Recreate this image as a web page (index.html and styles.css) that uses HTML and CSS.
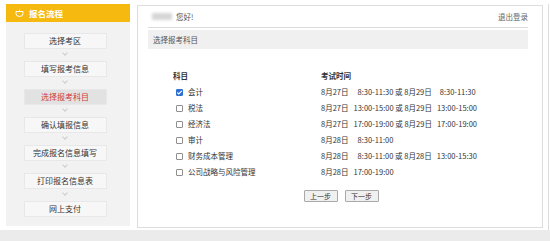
FILE: index.html
```html
<!DOCTYPE html>
<html lang="zh-CN">
<head>
<meta charset="UTF-8">
<meta name="viewport" content="width=device-width, initial-scale=1.0">
<title>选择报考科目</title>
<link rel="stylesheet" href="styles.css">
</head>
<body>
  <div class="page">
    <div class="sidebar">
      <div class="side-head">
        <svg class="side-icon" width="9" height="8" viewBox="0 0 9 8">
          <path d="M1 2.5h7v2a3.5 3 0 0 1-7 0z" fill="none" stroke="#fff" stroke-width="1"/>
          <path d="M4.5 0.5v2" stroke="#fff" stroke-width="1"/>
        </svg>
        <span>报名流程</span>
      </div>
      <div class="steps">
        <div class="step">选择考区</div>
        <div class="arrow"></div>
        <div class="step">填写报考信息</div>
        <div class="arrow"></div>
        <div class="step active">选择报考科目</div>
        <div class="arrow"></div>
        <div class="step">确认填报信息</div>
        <div class="arrow"></div>
        <div class="step">完成报名信息填写</div>
        <div class="arrow"></div>
        <div class="step">打印报名信息表</div>
        <div class="arrow"></div>
        <div class="step">网上支付</div>
      </div>
    </div>

    <div class="main">
      <div class="top-row">
        <div class="greet"><span class="blur"></span>您好!</div>
        <div class="logout">退出登录</div>
      </div>
      <div class="title-bar">选择报考科目</div>

      <table class="subjects">
        <tr class="head">
          <td class="c1">科目</td>
          <td>考试时间</td>
        </tr>
        <tr>
          <td class="c1"><span class="cb on"><svg width="7" height="7" viewBox="0 0 7 7"><path d="M1.3 3.5l1.5 1.5L5.8 1.9" fill="none" stroke="#fff" stroke-width="1.1"/></svg></span>会计</td>
          <td>8月27日<span class="t sp">8:30-11:30</span> 或 8月29日<span class="t sp2">8:30-11:30</span></td>
        </tr>
        <tr>
          <td class="c1"><span class="cb"></span>税法</td>
          <td>8月27日<span class="t">13:00-15:00</span> 或 8月29日<span class="t">13:00-15:00</span></td>
        </tr>
        <tr>
          <td class="c1"><span class="cb"></span>经济法</td>
          <td>8月27日<span class="t">17:00-19:00</span> 或 8月29日<span class="t">17:00-19:00</span></td>
        </tr>
        <tr>
          <td class="c1"><span class="cb"></span>审计</td>
          <td>8月28日<span class="t sp">8:30-11:00</span></td>
        </tr>
        <tr>
          <td class="c1"><span class="cb"></span>财务成本管理</td>
          <td>8月28日<span class="t sp">8:30-11:00</span> 或 8月28日<span class="t">13:00-15:30</span></td>
        </tr>
        <tr>
          <td class="c1"><span class="cb"></span>公司战略与风险管理</td>
          <td>8月28日<span class="t">17:00-19:00</span></td>
        </tr>
      </table>

      <div class="buttons">
        <button class="btn">上一步</button>
        <button class="btn">下一步</button>
      </div>
    </div>
    <div class="edge"></div>
  </div>
  <div class="footer"></div>
</body>
</html>
```

FILE: styles.css
```css
body {
  margin: 0;
  padding: 0;
  background-color: #ffffff;
  color: #333333;
  font-family: "Noto Sans CJK SC", "Liberation Sans", sans-serif;
}

.page {
  display: flex;
  align-items: flex-start;
  height: 230px;
  padding: 4px 0 0 6px;
  box-sizing: border-box;
}

/* left process column */
.sidebar {
  width: 124px;
  height: 222px;
  display: flex;
  flex-direction: column;
}

.side-head {
  height: 18px;
  background-color: #f6b910;
  display: flex;
  align-items: center;
  padding-left: 9px;
  gap: 5px;
  color: #ffffff;
  font-size: 8.5px;
  font-weight: bold;
}

.side-icon {
  display: block;
}

.steps {
  flex: 1;
  background-color: #f2f2f2;
  display: flex;
  flex-direction: column;
  align-items: center;
  padding-top: 11px;
  padding-right: 6px;
}

.step {
  width: 83px;
  height: 16px;
  box-sizing: border-box;
  border: 1px solid #e8e8e8;
  background-color: #f7f7f7;
  font-size: 8px;
  line-height: 14px;
  text-align: center;
  color: #333333;
}

.step.active {
  background-color: #e2e2e2;
  color: #d23a3a;
}

.arrow {
  height: 12px;
  width: 12px;
  position: relative;
}

.arrow::after {
  content: "";
  position: absolute;
  left: 4px;
  top: 2px;
  width: 3px;
  height: 3px;
  border-right: 1px solid #cccccc;
  border-bottom: 1px solid #cccccc;
  transform: rotate(45deg);
}

/* main panel */
.main {
  width: 406px;
  height: 223px;
  margin-left: 7px;
  margin-top: 1px;
  box-sizing: border-box;
  border: 1px solid #dddddd;
  padding: 0 14px 0 10px;
  font-size: 7.5px;
}

.top-row {
  display: flex;
  justify-content: space-between;
  align-items: center;
  height: 21px;
  border-bottom: 1px solid #dcdcdc;
}

.greet {
  display: flex;
  align-items: center;
  padding-left: 4px;
  color: #555555;
}

.blur {
  display: inline-block;
  width: 20px;
  height: 7px;
  margin-right: 4px;
  background-color: #d6d6d6;
  filter: blur(1.5px);
}

.logout {
  color: #666666;
}

.title-bar {
  margin-top: 2px;
  height: 19px;
  line-height: 19px;
  background-color: #f0f0f0;
  padding-left: 5px;
  color: #555555;
}

.subjects {
  margin: 19px 0 0 25px;
  border-collapse: collapse;
  color: #333333;
}

.subjects td {
  height: 16px;
  padding: 0;
  white-space: nowrap;
}

.subjects .c1 {
  width: 148px;
}

.subjects .head td {
  font-weight: bold;
  height: 15px;
}

.cb {
  display: inline-block;
  width: 7px;
  height: 7px;
  box-sizing: border-box;
  border: 1px solid #8f8f8f;
  border-radius: 1px;
  margin: 0 5px 0 3px;
  vertical-align: -1px;
  background-color: #ffffff;
}

.cb.on {
  background-color: #2d6fd2;
  border-color: #2d6fd2;
  position: relative;
}

.cb.on svg {
  position: absolute;
  left: -1px;
  top: -1px;
}

.t {
  margin-left: 5px;
}

.t.sp {
  margin-left: 9px;
}

.t.sp2 {
  margin-left: 8px;
}

.buttons {
  display: flex;
  justify-content: center;
  gap: 7px;
  margin-top: 11px;
  padding-left: 6px;
}

.btn {
  width: 34px;
  height: 12px;
  padding: 0;
  font-family: "Noto Sans CJK SC", sans-serif;
  font-size: 7px;
  line-height: 10px;
  color: #333333;
  background-color: #f0f0f0;
  border: 1px solid #a9a9a9;
  border-radius: 1px;
}

.edge {
  width: 1px;
  height: 226px;
  margin-left: 5px;
  background-color: #dddddd;
}

.footer {
  height: 11px;
  background-color: #ebebeb;
}
```
